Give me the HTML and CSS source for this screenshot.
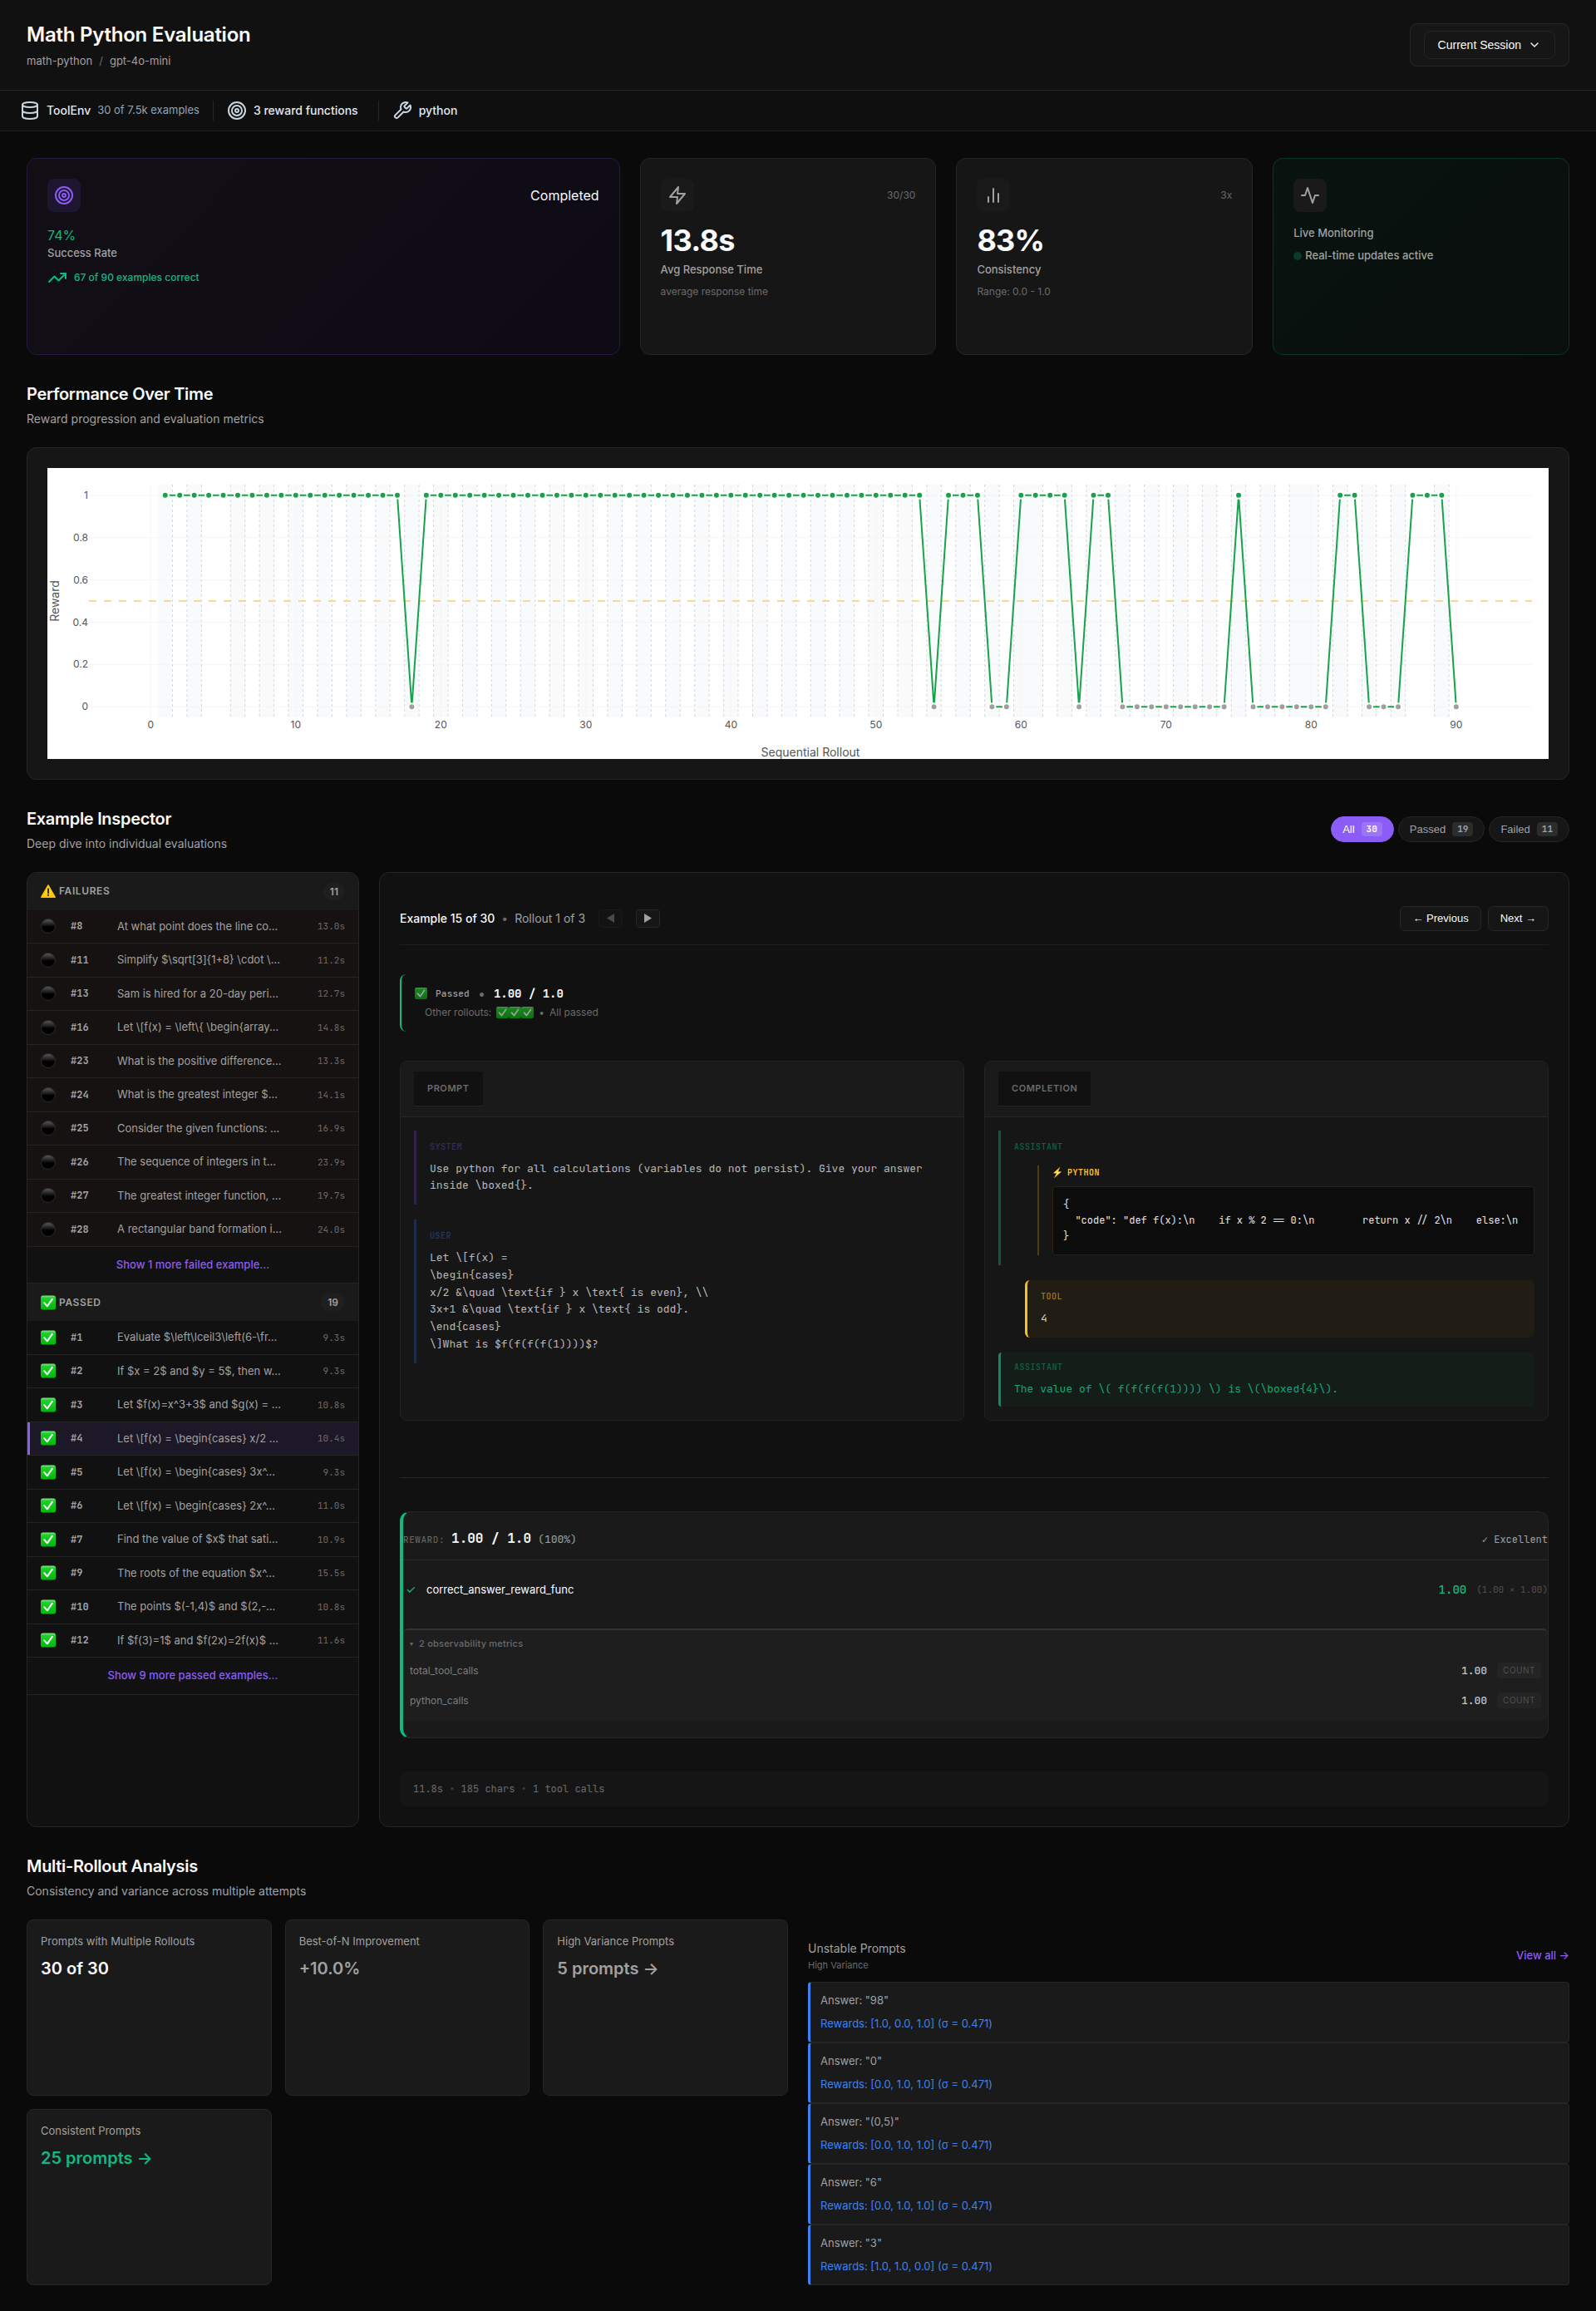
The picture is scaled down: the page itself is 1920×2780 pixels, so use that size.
FILE: index.html
```html
<!DOCTYPE html>
<html lang="en">
<head>
<meta charset="utf-8">
<meta name="viewport" content="width=device-width, initial-scale=1">
<title>Math Python Evaluation</title>
<link rel="stylesheet" href="styles.css">
</head>
<body>
<svg class="symbols" aria-hidden="true">
  <defs>
    <linearGradient id="check-fill" x1="0" y1="0" x2="0" y2="1"><stop offset="0" stop-color="#7fe886"/><stop offset="0.18" stop-color="#1fd02a"/><stop offset="1" stop-color="#00b80a"/></linearGradient>
    <linearGradient id="ball-fill" x1="0" y1="0" x2="0" y2="1"><stop offset="0" stop-color="#5c5c5c"/><stop offset="0.45" stop-color="#141414"/><stop offset="0.55" stop-color="#000000"/><stop offset="1" stop-color="#000000"/></linearGradient>
    <linearGradient id="warn-fill" x1="0" y1="0" x2="0" y2="1"><stop offset="0" stop-color="#ffe03a"/><stop offset="1" stop-color="#ffc400"/></linearGradient>
    <linearGradient id="bolt-fill" x1="0" y1="0" x2="0" y2="1"><stop offset="0" stop-color="#ffa51f"/><stop offset="0.5" stop-color="#ffe25a"/><stop offset="1" stop-color="#ffa51f"/></linearGradient>
  </defs>
  <symbol id="check" viewBox="0 0 18 18"><rect x="0" y="0.500" width="18" height="17" rx="2.500" fill="url(#check-fill)" stroke="none"/><path d="M4.200 9.200 7.800 13.300 13.800 4.800" fill="none" stroke="#ffffff" stroke-width="2"/></symbol>
  <symbol id="ball" viewBox="0 0 18 18"><circle cx="9" cy="9" r="8.500" fill="url(#ball-fill)" stroke="#2a2a2a" stroke-width="1"/></symbol>
  <symbol id="warn" viewBox="0 0 18 18"><path d="M9 1.800 17.200 16.200H0.800z" fill="url(#warn-fill)" stroke="#ffc400" stroke-width="1.400"/><path d="M9 6.200v5" fill="none" stroke="#1a1a1a" stroke-width="1.800"/><circle cx="9" cy="13.800" r="1.100" fill="#1a1a1a" stroke="none"/></symbol>
  <symbol id="bolt" viewBox="0 0 12 15"><path d="M9.500 0.500 1 8.200l4 0.300L1.800 14.500 11 6.600 7 6.200z" fill="url(#bolt-fill)" stroke="none"/></symbol>
</svg>

<header class="page-header">
  <div>
    <h1 class="page-title">Math Python Evaluation</h1>
    <p class="crumbs"><span>math-python</span><span class="crumb-sep">/</span><span>gpt-4o-mini</span></p>
  </div>
  <div class="session-box">
    <button type="button" class="session-button">Current Session
      <svg class="icon-16" viewBox="0 0 24 24"><path d="m6 9 6 6 6-6"/></svg>
    </button>
  </div>
</header>

<div class="info-bar">
  <div class="info-item">
    <svg class="icon-24" viewBox="0 0 24 24"><ellipse cx="12" cy="5" rx="9" ry="3"/><path d="M3 5v14a9 3 0 0 0 18 0V5"/><path d="M3 12a9 3 0 0 0 18 0"/></svg>
    <span class="info-name">ToolEnv</span><span class="info-detail">30 of 7.5k examples</span>
  </div>
  <div class="info-item info-item-wide">
    <svg class="icon-24" viewBox="0 0 24 24"><circle cx="12" cy="12" r="10"/><circle cx="12" cy="12" r="6"/><circle cx="12" cy="12" r="2"/></svg>
    <span class="info-name">3 reward functions</span>
  </div>
  <div class="info-item">
    <svg class="icon-24" viewBox="0 0 24 24"><path d="M14.7 6.3a1 1 0 0 0 0 1.4l1.6 1.6a1 1 0 0 0 1.4 0l3.77-3.77a6 6 0 0 1-7.94 7.94l-6.91 6.91a2.12 2.12 0 0 1-3-3l6.91-6.91a6 6 0 0 1 7.94-7.94l-3.76 3.76z"/></svg>
    <span class="info-name">python</span>
  </div>
</div>

<main class="page">
  <section class="metrics">
    <article class="card metric metric-primary">
      <div class="metric-top">
        <span class="metric-icon"><svg class="icon-24" viewBox="0 0 24 24"><circle cx="12" cy="12" r="10"/><circle cx="12" cy="12" r="6"/><circle cx="12" cy="12" r="2"/></svg></span>
        <span class="metric-state">Completed</span>
      </div>
      <div class="metric-rate">74%</div>
      <div class="metric-label">Success Rate</div>
      <div class="metric-trend"><svg class="icon-24" viewBox="0 0 24 24"><path d="M22 7 13.500 15.500 8.500 10.500 2 17"/><path d="M16 7h6v6"/></svg>67 of 90 examples correct</div>
    </article>
    <article class="card metric">
      <div class="metric-top">
        <span class="metric-icon"><svg class="icon-24" viewBox="0 0 24 24"><path d="M13 2 3 14h9l-1 8 10-12h-9l1-8z"/></svg></span>
        <span class="metric-note">30/30</span>
      </div>
      <div class="metric-value">13.8s</div>
      <div class="metric-label">Avg Response Time</div>
      <div class="metric-sub">average response time</div>
    </article>
    <article class="card metric">
      <div class="metric-top">
        <span class="metric-icon"><svg class="icon-24" viewBox="0 0 24 24"><path d="M12 20V4M6 20v-6M18 20V10"/></svg></span>
        <span class="metric-note">3x</span>
      </div>
      <div class="metric-value">83%</div>
      <div class="metric-label">Consistency</div>
      <div class="metric-sub">Range: 0.0 - 1.0</div>
    </article>
    <article class="card metric metric-live">
      <div class="metric-top">
        <span class="metric-icon"><svg class="icon-24" viewBox="0 0 24 24"><path d="M22 12h-4l-3 9L9 3l-3 9H2"/></svg></span>
      </div>
      <div class="metric-label">Live Monitoring</div>
      <div class="live-row"><span class="live-dot"></span>Real-time updates active</div>
    </article>
  </section>

  <section>
    <div class="section-head">
      <div>
        <h2 class="section-title">Performance Over Time</h2>
        <p class="section-sub">Reward progression and evaluation metrics</p>
      </div>
    </div>
    <div class="card chart-card">
      <svg id="reward-chart" class="chart" viewBox="0 0 1806 350" role="img" aria-label="Reward by sequential rollout"></svg>
    </div>
  </section>

  <section>
    <div class="section-head">
      <div>
        <h2 class="section-title">Example Inspector</h2>
        <p class="section-sub">Deep dive into individual evaluations</p>
      </div>
      <div class="filters">
        <button type="button" class="pill pill-active">All<span class="pill-count">30</span></button>
        <button type="button" class="pill">Passed<span class="pill-count">19</span></button>
        <button type="button" class="pill">Failed<span class="pill-count">11</span></button>
      </div>
    </div>

    <div class="inspector">
      <aside class="card list">
        <h3 class="list-head"><svg class="mark"><use href="#warn"/></svg><span class="list-title">Failures</span><span class="list-count">11</span></h3>
        <button type="button" class="row row-failed"><svg class="mark"><use href="#ball"/></svg><span class="row-id">#8</span><span class="row-text">At what point does the line co...</span><span class="row-time">13.0s</span></button>
        <button type="button" class="row row-failed"><svg class="mark"><use href="#ball"/></svg><span class="row-id">#11</span><span class="row-text">Simplify $\sqrt[3]{1+8} \cdot \...</span><span class="row-time">11.2s</span></button>
        <button type="button" class="row row-failed"><svg class="mark"><use href="#ball"/></svg><span class="row-id">#13</span><span class="row-text">Sam is hired for a 20-day peri...</span><span class="row-time">12.7s</span></button>
        <button type="button" class="row row-failed"><svg class="mark"><use href="#ball"/></svg><span class="row-id">#16</span><span class="row-text">Let \[f(x) = \left\{ \begin{array...</span><span class="row-time">14.8s</span></button>
        <button type="button" class="row row-failed"><svg class="mark"><use href="#ball"/></svg><span class="row-id">#23</span><span class="row-text">What is the positive difference...</span><span class="row-time">13.3s</span></button>
        <button type="button" class="row row-failed"><svg class="mark"><use href="#ball"/></svg><span class="row-id">#24</span><span class="row-text">What is the greatest integer $...</span><span class="row-time">14.1s</span></button>
        <button type="button" class="row row-failed"><svg class="mark"><use href="#ball"/></svg><span class="row-id">#25</span><span class="row-text">Consider the given functions: ...</span><span class="row-time">16.9s</span></button>
        <button type="button" class="row row-failed"><svg class="mark"><use href="#ball"/></svg><span class="row-id">#26</span><span class="row-text">The sequence of integers in t...</span><span class="row-time">23.9s</span></button>
        <button type="button" class="row row-failed"><svg class="mark"><use href="#ball"/></svg><span class="row-id">#27</span><span class="row-text">The greatest integer function, ...</span><span class="row-time">19.7s</span></button>
        <button type="button" class="row row-failed"><svg class="mark"><use href="#ball"/></svg><span class="row-id">#28</span><span class="row-text">A rectangular band formation i...</span><span class="row-time">24.0s</span></button>
        <button type="button" class="more">Show 1 more failed example...</button>

        <h3 class="list-head"><svg class="mark"><use href="#check"/></svg><span class="list-title">Passed</span><span class="list-count">19</span></h3>
        <button type="button" class="row"><svg class="mark"><use href="#check"/></svg><span class="row-id">#1</span><span class="row-text">Evaluate $\left\lceil3\left(6-\fr...</span><span class="row-time">9.3s</span></button>
        <button type="button" class="row"><svg class="mark"><use href="#check"/></svg><span class="row-id">#2</span><span class="row-text">If $x = 2$ and $y = 5$, then w...</span><span class="row-time">9.3s</span></button>
        <button type="button" class="row"><svg class="mark"><use href="#check"/></svg><span class="row-id">#3</span><span class="row-text">Let $f(x)=x^3+3$ and $g(x) = ...</span><span class="row-time">10.8s</span></button>
        <button type="button" class="row row-selected"><svg class="mark"><use href="#check"/></svg><span class="row-id">#4</span><span class="row-text">Let \[f(x) = \begin{cases} x/2 ...</span><span class="row-time">10.4s</span></button>
        <button type="button" class="row"><svg class="mark"><use href="#check"/></svg><span class="row-id">#5</span><span class="row-text">Let \[f(x) = \begin{cases} 3x^...</span><span class="row-time">9.3s</span></button>
        <button type="button" class="row"><svg class="mark"><use href="#check"/></svg><span class="row-id">#6</span><span class="row-text">Let \[f(x) = \begin{cases} 2x^...</span><span class="row-time">11.0s</span></button>
        <button type="button" class="row"><svg class="mark"><use href="#check"/></svg><span class="row-id">#7</span><span class="row-text">Find the value of $x$ that sati...</span><span class="row-time">10.9s</span></button>
        <button type="button" class="row"><svg class="mark"><use href="#check"/></svg><span class="row-id">#9</span><span class="row-text">The roots of the equation $x^...</span><span class="row-time">15.5s</span></button>
        <button type="button" class="row"><svg class="mark"><use href="#check"/></svg><span class="row-id">#10</span><span class="row-text">The points $(-1,4)$ and $(2,-...</span><span class="row-time">10.8s</span></button>
        <button type="button" class="row"><svg class="mark"><use href="#check"/></svg><span class="row-id">#12</span><span class="row-text">If $f(3)=1$ and $f(2x)=2f(x)$ ...</span><span class="row-time">11.6s</span></button>
        <button type="button" class="more">Show 9 more passed examples...</button>
      </aside>

      <div class="card detail">
        <div class="detail-nav">
          <div class="detail-pos">
            <strong>Example 15 of 30</strong><span class="dot">•</span><span>Rollout 1 of 3</span>
            <button type="button" class="step" disabled aria-label="Previous rollout"><svg viewBox="0 0 10 12"><path d="M10 0v12L0 6z"/></svg></button>
            <button type="button" class="step" aria-label="Next rollout"><svg viewBox="0 0 10 12"><path d="M0 0v12l10-6z"/></svg></button>
          </div>
          <div class="detail-buttons">
            <button type="button" class="nav-button">← Previous</button>
            <button type="button" class="nav-button">Next →</button>
          </div>
        </div>

        <div class="verdict">
          <div class="verdict-main"><svg class="mark mark-small"><use href="#check"/></svg><span class="verdict-label">Passed</span><span class="dot">•</span><span class="verdict-score">1.00 / 1.0</span></div>
          <div class="verdict-other">Other rollouts:<span class="verdict-marks"><svg class="mark mark-small"><use href="#check"/></svg><svg class="mark mark-small"><use href="#check"/></svg><svg class="mark mark-small"><use href="#check"/></svg></span><span class="dot">•</span>All passed</div>
        </div>

        <div class="dialog">
          <div class="pane">
            <div class="pane-head"><span class="pane-tab">Prompt</span></div>
            <div class="pane-body">
              <div class="message message-system">
                <div class="role">System</div>
                <div class="message-text">Use python for all calculations (variables do not persist). Give your answer inside \boxed{}.</div>
              </div>
              <div class="message message-user">
                <div class="role">User</div>
                <div class="message-text">Let \[f(x) =
\begin{cases}
x/2 &amp;\quad \text{if } x \text{ is even}, \\
3x+1 &amp;\quad \text{if } x \text{ is odd}.
\end{cases}
\]What is $f(f(f(f(1))))$?</div>
              </div>
            </div>
          </div>
          <div class="pane">
            <div class="pane-head"><span class="pane-tab">Completion</span></div>
            <div class="pane-body">
              <div class="message message-assistant">
                <div class="role">Assistant</div>
                <div class="call">
                  <div class="call-name"><svg class="bolt"><use href="#bolt"/></svg>python</div>
                  <pre class="code"><code>{
  "code": "def f(x):\n    if x % 2 == 0:\n        return x // 2\n    else:\n
}</code></pre>
                </div>
              </div>
              <div class="message message-tool">
                <div class="role">Tool</div>
                <div class="message-text">4</div>
              </div>
              <div class="message message-final">
                <div class="role">Assistant</div>
                <div class="message-text">The value of \( f(f(f(f(1)))) \) is \(\boxed{4}\).</div>
              </div>
            </div>
          </div>
        </div>

        <div class="reward-wrap">
          <div class="reward">
            <div class="reward-head">
              <div class="reward-total"><span class="reward-key">Reward:</span><span class="reward-score">1.00 / 1.0</span><span class="reward-pct">(100%)</span></div>
              <span class="reward-grade">✓ Excellent</span>
            </div>
            <div class="reward-func">
              <span class="tick">✓</span><span class="func-name">correct_answer_reward_func</span><span class="func-score">1.00</span><span class="func-calc">(1.00 × 1.00)</span>
            </div>
            <div class="observed">
              <div class="observed-title"><span class="caret">▾</span>2 observability metrics</div>
              <div class="observed-row"><span>total_tool_calls</span><span class="observed-value">1.00</span><span class="tag">Count</span></div>
              <div class="observed-row"><span>python_calls</span><span class="observed-value">1.00</span><span class="tag">Count</span></div>
            </div>
          </div>
        </div>

        <div class="stats">11.8s <span class="stats-dot">•</span> 185 chars <span class="stats-dot">•</span> 1 tool calls</div>
      </div>
    </div>
  </section>

  <section>
    <div class="section-head">
      <div>
        <h2 class="section-title">Multi-Rollout Analysis</h2>
        <p class="section-sub">Consistency and variance across multiple attempts</p>
      </div>
    </div>
    <div class="analysis">
      <div class="tiles">
        <div class="tile"><div class="tile-label">Prompts with Multiple Rollouts</div><div class="tile-value">30 of 30</div></div>
        <div class="tile"><div class="tile-label">Best-of-N Improvement</div><div class="tile-value tile-muted">+10.0%</div></div>
        <div class="tile"><div class="tile-label">High Variance Prompts</div><div class="tile-value tile-muted">5 prompts →</div></div>
        <div class="tile"><div class="tile-label">Consistent Prompts</div><div class="tile-value tile-good">25 prompts →</div></div>
      </div>
      <div class="unstable">
        <div class="unstable-head">
          <div><h3 class="unstable-title">Unstable Prompts</h3><p class="unstable-sub">High Variance</p></div>
          <a href="#unstable" class="view-all">View all →</a>
        </div>
        <div class="unstable-item"><div>Answer: "98"</div><div class="rewards">Rewards: [1.0, 0.0, 1.0] (σ = 0.471)</div></div>
        <div class="unstable-item"><div>Answer: "0"</div><div class="rewards">Rewards: [0.0, 1.0, 1.0] (σ = 0.471)</div></div>
        <div class="unstable-item"><div>Answer: "(0,5)"</div><div class="rewards">Rewards: [0.0, 1.0, 1.0] (σ = 0.471)</div></div>
        <div class="unstable-item"><div>Answer: "6"</div><div class="rewards">Rewards: [0.0, 1.0, 1.0] (σ = 0.471)</div></div>
        <div class="unstable-item"><div>Answer: "3"</div><div class="rewards">Rewards: [1.0, 1.0, 0.0] (σ = 0.471)</div></div>
      </div>
    </div>
  </section>
</main>
<script src="chart.js"></script>
</body>
</html>
```

FILE: styles.css
```css
:root {
  --bg: #0a0a0a;
  --surface: #111111;
  --card: #161616;
  --raised: #1a1a1a;
  --line: #262626;
  --line-soft: #1f1f1f;
  --text: #fafafa;
  --text-2: #a1a1a1;
  --text-3: #6b6b6b;
  --text-4: #505050;
  --purple: #8b5cf6;
  --green: #10b981;
  --amber: #fbbf24;
  --blue: #3b82f6;
  --sans: Inter, "Noto Sans", sans-serif;
  --ui: "Liberation Sans", Arial, sans-serif;
  --mono: "JetBrains Mono", "DejaVu Sans Mono", monospace;
}

* { box-sizing: border-box; }

body {
  margin: 0;
  background: var(--bg);
  color: var(--text);
  font: 16px/1.5 var(--sans);
}

h1, h2, h3, p, pre { margin: 0; }

button {
  font-family: var(--ui);
  color: var(--text);
  cursor: pointer;
}

svg {
  fill: none;
  stroke: currentColor;
  stroke-width: 2;
  stroke-linecap: round;
  stroke-linejoin: round;
  flex: none;
}

.symbols { position: absolute; width: 0; height: 0; }
.icon-16 { width: 16px; height: 16px; }
.icon-24 { width: 24px; height: 24px; }
.mark { width: 18px; height: 18px; }
.mark-small { width: 15px; height: 16px; }
.bolt { width: 12px; height: 15px; }

/* Header */
.page-header {
  display: flex;
  justify-content: space-between;
  align-items: center;
  padding: 24px 32px;
  background: var(--surface);
  border-bottom: 1px solid var(--line);
}

.page-title { font-size: 24px; font-weight: 600; letter-spacing: -0.01em; }

.crumbs {
  display: flex;
  gap: 8px;
  margin-top: 4px;
  font-size: 13px;
  color: var(--text-2);
}

.crumb-sep { color: var(--text-3); }

.session-box {
  padding: 8px 16px;
  background: var(--card);
  border: 1px solid var(--line);
  border-radius: 8px;
}

.session-button {
  display: flex;
  align-items: center;
  gap: 8px;
  height: 34px;
  padding: 0 16px;
  font-size: 14px;
  background: var(--card);
  border: 1px solid var(--line);
  border-radius: 8px;
}

.info-bar {
  display: flex;
  padding: 12px 24px;
  background: #0f0f0f;
  border-bottom: 1px solid var(--line-soft);
}

.info-item {
  display: flex;
  align-items: center;
  gap: 8px;
  padding-right: 16px;
  margin-right: 16px;
  border-right: 1px solid var(--line);
  color: #cbd5e1;
}

.info-item-wide { padding-right: 24px; }
.info-item:last-child { border-right: 0; }
.info-name { font-size: 14px; font-weight: 500; color: #e2e8f0; }
.info-detail { font-size: 13px; color: #94a3b8; }

.page {
  display: flex;
  flex-direction: column;
  gap: 32px;
  padding: 32px;
}

.card {
  background: var(--card);
  border: 1px solid var(--line);
  border-radius: 12px;
}

/* Metric cards */
.metrics {
  display: grid;
  grid-template-columns: 2fr 1fr 1fr 1fr;
  gap: 24px;
}

.metric { min-height: 237px; padding: 24px; }

.metric-primary {
  background: linear-gradient(135deg, #110f15, #110d15 50%, #0e0a16);
  border-color: #241b3d;
}

.metric-live {
  background: linear-gradient(135deg, #08130f, #0a0f0d);
  border-color: #0b3527;
}

.metric-top {
  display: flex;
  justify-content: space-between;
  align-items: center;
  margin-bottom: 16px;
}

.metric-icon {
  display: grid;
  place-items: center;
  width: 40px;
  height: 40px;
  border-radius: 8px;
  background: var(--raised);
  color: var(--text-2);
}

.metric-primary .metric-icon { background: #1e1530; color: var(--purple); }
.metric-note { font-size: 12px; color: var(--text-3); }
.metric-rate { line-height: 24px; color: var(--green); }

.metric-value {
  margin-bottom: 8px;
  font-size: 36px;
  font-weight: 700;
  line-height: 36px;
  letter-spacing: -0.02em;
}

.metric-label { font-size: 13px; font-weight: 500; color: var(--text-2); }
.metric-sub { margin-top: 8px; font-size: 12px; color: var(--text-3); }

.metric-trend {
  display: flex;
  align-items: center;
  gap: 8px;
  margin-top: 8px;
  font-size: 12px;
  font-weight: 500;
  color: var(--green);
}

.live-row {
  display: flex;
  align-items: center;
  gap: 4px;
  margin-top: 8px;
  font-size: 13px;
  font-weight: 500;
  color: var(--text-2);
}

.live-dot {
  width: 10px;
  height: 10px;
  border-radius: 50%;
  background: #0c3a2b;
}

/* Sections */
.section-head {
  display: flex;
  justify-content: space-between;
  align-items: center;
  margin-bottom: 24px;
}

.section-title { font-size: 20px; font-weight: 600; letter-spacing: -0.015em; }
.section-sub { margin-top: 4px; font-size: 14px; color: var(--text-2); }

.chart-card { padding: 24px; }

.chart {
  display: block;
  width: 100%;
  background: #ffffff;
  stroke: none;
  font-family: var(--sans);
}

.chart text { fill: #555555; font-size: 12px; }
.chart .axis-title { font-size: 14px; text-anchor: middle; }
.chart .tick-x { text-anchor: middle; }
.chart .tick-y { text-anchor: end; }
.chart .band { fill: #f8fafc; }
.chart .grid { stroke: #f5f5f5; stroke-width: 1; }
.chart .edge { stroke: #d4d8de; stroke-width: 1; stroke-dasharray: 3 3; stroke-linecap: butt; }
.chart .half { stroke: #fcd98a; stroke-width: 2; stroke-dasharray: 9 9; stroke-linecap: butt; }
.chart .series { stroke: #16a34a; stroke-width: 2; }
.chart .point { fill: #16a34a; stroke: #ffffff; stroke-width: 2; }
.chart .point-zero { fill: #9f9f9f; }

/* Filters */
.filters { display: flex; gap: 5px; }

.pill {
  display: flex;
  align-items: center;
  gap: 8px;
  height: 31px;
  padding: 0 13px;
  font-size: 13px;
  color: var(--text-2);
  background: var(--card);
  border: 1px solid var(--line);
  border-radius: 16px;
}

.pill-active { color: #ffffff; background: var(--purple); border-color: var(--purple); }

.pill-count {
  padding: 0 6px;
  font: 600 11px/17px var(--mono);
  background: #2c2c2c;
  border-radius: 4px;
}

.pill-active .pill-count { background: #9d74f8; }

/* Example list */
.inspector {
  display: grid;
  grid-template-columns: 400px minmax(0, 1fr);
  gap: 24px;
}

.list { overflow: hidden; background: var(--surface); }

.list-head {
  display: flex;
  align-items: center;
  gap: 4px;
  min-height: 45px;
  padding: 0 16px;
  font-size: 12px;
  font-weight: 600;
  color: var(--text-2);
  background: var(--raised);
}

.list-title { flex: 1; text-transform: uppercase; letter-spacing: 0.05em; }

.list-count {
  padding: 2px 8px;
  font-size: 12px;
  line-height: 17px;
  background: var(--line-soft);
  border-radius: 12px;
}

.row {
  display: grid;
  grid-template-columns: 24px 44px minmax(0, 1fr) auto;
  align-items: center;
  gap: 12px;
  width: 100%;
  padding: 10px 16px;
  text-align: left;
  font: 13px/1.5 var(--sans);
  color: var(--text-2);
  background: none;
  border: 0;
  border-bottom: 1px solid #242424;
}

.row-failed { background: #161211; }
.row-selected { background: #1c1827; box-shadow: inset 3px 0 var(--purple); }
.row-id { font: 600 12px/16px var(--mono); }
.row-text { white-space: nowrap; overflow: hidden; }
.row-time { font: 11px/16px var(--mono); color: var(--text-3); }

.more {
  display: block;
  width: 100%;
  padding: 12px 16px;
  font: 500 13px/1.5 var(--sans);
  color: var(--purple);
  background: none;
  border: 0;
  border-bottom: 1px solid #242424;
}

/* Example detail */
.detail { padding: 24px; background: var(--surface); }

.detail-nav {
  display: flex;
  justify-content: space-between;
  align-items: center;
  padding: 16px 0;
  margin-bottom: 35px;
  border-bottom: 1px solid var(--line-soft);
}

.detail-pos {
  display: flex;
  align-items: center;
  gap: 8px;
  font-size: 14px;
  color: var(--text-2);
}

.detail-pos strong { font-weight: 500; color: var(--text); }
.dot { color: var(--text-3); }

.step {
  display: grid;
  place-items: center;
  width: 29px;
  height: 22px;
  margin-left: 8px;
  padding: 0;
  color: var(--text-2);
  background: var(--card);
  border: 1px solid var(--line);
  border-radius: 4px;
}

.step svg { width: 9px; height: 11px; fill: currentColor; stroke: none; }
.step:disabled { opacity: 0.4; cursor: default; }

.detail-buttons { display: flex; gap: 8px; }

.nav-button {
  height: 30px;
  padding: 0 14px;
  font-size: 13px;
  background: var(--card);
  border: 1px solid var(--line);
  border-radius: 6px;
}

.verdict {
  padding: 12px 16px;
  margin-bottom: 35px;
  border-left: 2px solid var(--green);
  border-radius: 8px;
}

.verdict-main {
  display: flex;
  align-items: center;
  gap: 10px;
  line-height: 22px;
}

.verdict .mark { opacity: 0.6; }

.verdict-label {
  font: 500 11px/16px var(--mono);
  letter-spacing: 0.02em;
  color: var(--text-2);
}

.verdict-score { font: 600 14px/22px var(--mono); }

.verdict-other {
  display: flex;
  align-items: center;
  gap: 6px;
  padding: 3px 12px 2px;
  font-size: 12px;
  line-height: 18px;
  color: var(--text-3);
}

.verdict-marks { display: flex; }

.dialog {
  display: grid;
  grid-template-columns: repeat(2, minmax(0, 1fr));
  gap: 24px;
  margin-bottom: 68px;
}

.pane {
  overflow: hidden;
  background: var(--card);
  border: 1px solid #222222;
  border-radius: 8px;
}

.pane-head {
  display: flex;
  padding: 12px 16px;
  background: var(--raised);
  border-bottom: 1px solid var(--line);
}

.pane-tab {
  padding: 12px 16px;
  font-size: 11px;
  font-weight: 600;
  line-height: 17px;
  letter-spacing: 0.05em;
  text-transform: uppercase;
  color: var(--text-3);
  background: var(--surface);
  border-bottom: 1px solid var(--line);
}

.pane-body {
  display: flex;
  flex-direction: column;
  gap: 18px;
  padding: 16px;
}

.message { padding: 12px 16px; border-left: 3px solid; }

.role {
  margin-bottom: 8px;
  font: 500 10px/16px var(--mono);
  letter-spacing: 0.05em;
  text-transform: uppercase;
}

.message-text {
  font: 13px/1.6 var(--mono);
  color: #b8b8b8;
  white-space: pre-wrap;
}

.message-system { border-color: #2f2348; }
.message-system .role { color: #3a2b5e; }
.message-user { border-color: #1d2c4b; }
.message-user .role { color: #203a6b; }
.message-assistant { padding-right: 0; border-color: #15553f; }
.message-assistant .role { color: #146045; }

.message-tool {
  margin-left: 32px;
  background: #211d15;
  border-color: var(--amber);
  border-radius: 6px;
}

.message-tool .role { color: #a67c17; }
.message-tool .message-text { color: #d4d4d4; }

.message-final {
  padding: 10px 16px;
  background: #151d19;
  border-color: #128a63;
  border-radius: 4px;
}

.message-final .role { color: #146045; }
.message-final .message-text { color: #12a876; }

.call {
  margin: 14px 0 0 28px;
  padding-left: 16px;
  border-left: 2px solid #4d3c14;
}

.call-name {
  display: flex;
  align-items: center;
  gap: 6px;
  margin-bottom: 8px;
  font: 600 10px/17px var(--mono);
  letter-spacing: 0.05em;
  text-transform: uppercase;
  color: var(--amber);
}

.code {
  overflow: hidden;
  padding: 12px;
  font: 12px/1.6 var(--mono);
  color: #e5e5e5;
  background: #0c0c0c;
  border: 1px solid #2b2210;
  border-radius: 4px;
}

.code code { font: inherit; }

/* Reward summary */
.reward-wrap {
  padding: 40px 0;
  border-top: 1px solid var(--line);
}

.reward {
  overflow: hidden;
  padding-bottom: 20px;
  background: var(--raised);
  border: 1px solid var(--line);
  border-left: 4px solid var(--green);
  border-radius: 12px;
}

.reward-head {
  display: flex;
  justify-content: space-between;
  align-items: baseline;
  padding: 20px 0 12px;
  border-bottom: 1px solid #2b2b2b;
  font: 12px/24px var(--mono);
  color: var(--text-2);
}

.reward-total { display: flex; align-items: baseline; gap: 8px; }

.reward-key {
  font-size: 11px;
  letter-spacing: 0.05em;
  text-transform: uppercase;
  color: var(--text-3);
}

.reward-score { font-size: 16px; font-weight: 600; color: var(--text); }
.reward-pct { font-size: 13px; }

.reward-func {
  display: flex;
  align-items: center;
  padding: 24px 0 36px;
  font: 14px/22px var(--mono);
}

.tick { width: 28px; padding-left: 3px; font-family: var(--sans); color: var(--green); }
.func-name { flex: 1; font: 13px/22px var(--sans); }
.func-score { margin-right: 12px; font-weight: 500; color: var(--green); }
.func-calc { font-size: 11px; color: var(--text-4); }

.observed {
  padding: 8px 8px 6px;
  background: #1e1e1e;
  border-top: 2px solid #333333;
  border-radius: 6px;
}

.observed-title {
  display: flex;
  gap: 4px;
  margin-bottom: 6px;
  font-size: 11px;
  font-weight: 500;
  line-height: 17px;
  letter-spacing: 0.02em;
  color: var(--text-3);
}

.caret { width: 7px; font-size: 8px; }

.observed-row {
  display: flex;
  align-items: center;
  gap: 12px;
  min-height: 36px;
  font-size: 12px;
  color: #7d7d7d;
}

.observed-value {
  margin-left: auto;
  font: 500 13px/20px var(--mono);
  color: #c4c4c4;
}

.tag {
  padding: 1px 7px;
  font-size: 10px;
  line-height: 17px;
  letter-spacing: 0.05em;
  text-transform: uppercase;
  color: #525252;
  background: #242424;
  border-radius: 4px;
}

.stats {
  padding: 12px 16px;
  font: 12px/18px var(--mono);
  color: var(--text-3);
  background: #151515;
  border-radius: 6px;
}

.stats-dot { color: #404040; }

/* Multi-rollout analysis */
.analysis {
  display: grid;
  grid-template-columns: repeat(2, minmax(0, 1fr));
  gap: 24px;
}

.tiles {
  display: grid;
  grid-template-columns: repeat(3, minmax(0, 1fr));
  grid-auto-rows: 1fr;
  gap: 16px;
}

.tile {
  padding: 16px;
  background: var(--raised);
  border: 1px solid var(--line);
  border-radius: 8px;
}

.tile-label { margin-bottom: 8px; font-size: 13px; color: var(--text-2); }
.tile-value { font-size: 20px; font-weight: 600; }
.tile-muted { color: var(--text-2); }
.tile-good { color: var(--green); }

.unstable { font-size: 13px; color: var(--text-2); }

.unstable-head {
  display: flex;
  justify-content: space-between;
  align-items: center;
  padding: 24px 0 12px;
}

.unstable-title { font-size: 14px; font-weight: 400; }
.unstable-sub { margin-top: 2px; font-size: 11px; color: var(--text-3); }
.view-all { font-weight: 500; color: var(--purple); text-decoration: none; }

.unstable-item {
  padding: 12px;
  background: var(--raised);
  border: 1px solid var(--line);
  border-left: 3px solid var(--blue);
  border-radius: 4px;
}

.rewards { margin-top: 8px; color: var(--blue); }
```

FILE: chart.js
```js
(function () {
  const svg = document.getElementById('reward-chart');
  const NS = 'http://www.w3.org/2000/svg';
  const TOP = 20;
  const BOTTOM = 300;
  const LEFT = 50;
  const RIGHT = 1786;
  const X0 = 124.3;
  const STEP = 17.45;
  const x = (v) => X0 + v * STEP;
  const y = (v) => 287.3 - v * 254.5;

  function add(tag, cls, attrs, text) {
    const node = document.createElementNS(NS, tag);
    node.setAttribute('class', cls);
    for (const key in attrs) node.setAttribute(key, attrs[key]);
    if (text !== undefined) node.textContent = text;
    svg.appendChild(node);
  }

  const line = (cls, x1, y1, x2, y2) => add('line', cls, { x1, y1, x2, y2 });

  const merged = new Set([4, 60, 79, 87]);
  let start = 0.5;
  let shaded = true;
  const edges = [];
  for (let k = 1; k <= 89; k++) {
    if (merged.has(k)) continue;
    const end = k + 0.5;
    if (shaded) {
      add('rect', 'band', { x: x(start), y: TOP, width: (end - start) * STEP, height: BOTTOM - TOP });
    }
    edges.push(end);
    start = end;
    shaded = !shaded;
  }

  for (let v = 0; v <= 90; v += 10) line('grid', x(v), TOP, x(v), BOTTOM);
  for (let i = 0; i <= 5; i++) line('grid', LEFT, y(i / 5), RIGHT, y(i / 5));
  edges.forEach((v) => line('edge', x(v), TOP, x(v), BOTTOM));
  line('half', LEFT, y(0.5), RIGHT, y(0.5));

  const zeros = new Set([18, 54, 58, 59, 64, 67, 68, 69, 70, 71, 72, 73, 74, 76, 77, 78, 79, 80, 81, 84, 85, 86, 90]);
  const points = [];
  for (let k = 1; k <= 90; k++) points.push([x(k), y(zeros.has(k) ? 0 : 1), zeros.has(k)]);
  add('polyline', 'series', { points: points.map((p) => p[0] + ',' + p[1]).join(' ') });
  points.forEach((p) => add('circle', p[2] ? 'point point-zero' : 'point', { cx: p[0], cy: p[1], r: 4 }));

  for (let v = 0; v <= 90; v += 10) add('text', 'tick-x', { x: x(v), y: 313 }, v);
  for (let i = 0; i <= 5; i++) add('text', 'tick-y', { x: 49, y: y(i / 5) + 4 }, i / 5);
  add('text', 'axis-title', { x: 918, y: 347 }, 'Sequential Rollout');
  add('text', 'axis-title', { transform: 'translate(14 160) rotate(-90)' }, 'Reward');
})();
```
